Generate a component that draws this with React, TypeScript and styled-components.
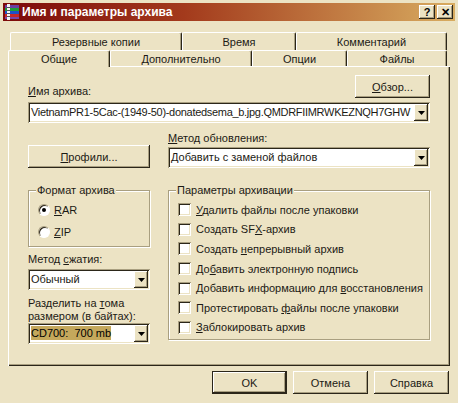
import React from 'react';
import styled, { createGlobalStyle } from 'styled-components';

const FACE = '#ECE3C4';
const LIGHT = '#FFFFFF';
const SHADOW = '#A99F80';
const DARK = '#2B2619';
const TEXT = '#1c1a14';
const FONT = '"Liberation Sans", Arial, sans-serif';

const Global = createGlobalStyle`
  html, body { margin: 0; padding: 0; background: ${FACE}; }
  body { font-family: ${FONT}; font-size: 11px; color: ${TEXT}; }
  * { box-sizing: border-box; }
`;

const Window = styled.div`
  width: 458px;
  height: 403px;
  background: ${FACE};
  padding: 3px 3px 0;
  display: flex;
  flex-direction: column;
  overflow: hidden;
`;

const TitleBar = styled.div`
  height: 18px;
  display: flex;
  align-items: center;
  padding: 0 2px 0 1px;
  background: linear-gradient(to right, #7c0a0a 0%, #a33a1c 40%, #d8ac60 100%);
`;

const TitleText = styled.span`
  color: #fff;
  font-weight: bold;
  font-size: 12px;
  margin-left: 2px;
  flex: 1;
  white-space: nowrap;
`;

const CaptionButton = styled.div<{ $gap?: number }>`
  width: 16px;
  height: 14px;
  margin-left: ${(p) => p.$gap ?? 0}px;
  background: ${FACE};
  box-shadow: inset -1px -1px ${DARK}, inset 1px 1px ${LIGHT}, inset -2px -2px ${SHADOW};
  display: flex;
  align-items: center;
  justify-content: center;
  font-weight: bold;
  font-size: 11px;
  line-height: 14px;
  color: #000;
`;

const TabArea = styled.div`
  margin-top: 11px;
  padding-left: 5px;
  display: flex;
  flex-direction: column;
`;

const TabRow = styled.div<{ $h: number; $indent?: number }>`
  display: flex;
  height: ${(p) => p.$h}px;
  margin-left: ${(p) => p.$indent ?? 0}px;
`;

const Tab = styled.div<{ $w: number; $active?: boolean }>`
  width: ${(p) => p.$w}px;
  height: ${(p) => (p.$active ? 'calc(100% + 1px)' : '100%')};
  display: flex;
  align-items: center;
  justify-content: center;
  background: ${FACE};
  border-top: 1px solid ${LIGHT};
  border-left: 1px solid ${LIGHT};
  border-right: 1px solid ${DARK};
  border-radius: 2px 2px 0 0;
  box-shadow: inset -1px 0 ${SHADOW};
  position: relative;
  z-index: ${(p) => (p.$active ? 2 : 0)};
  white-space: nowrap;
`;

const Panel = styled.div`
  width: 442px;
  height: 300px;
  padding: 9px 20px 0 20px;
  box-shadow: inset 1px 1px ${LIGHT}, inset -1px -1px ${DARK}, inset -2px -2px ${SHADOW};
  display: flex;
  flex-direction: column;
`;

const TopRow = styled.div`
  display: flex;
  justify-content: space-between;
  align-items: flex-end;
`;

const Label = styled.div<{ $mt?: number }>`
  line-height: 13px;
  margin-top: ${(p) => p.$mt ?? 0}px;
  white-space: nowrap;
`;

const U = styled.span`
  text-decoration: underline;
  text-underline-offset: 1px;
`;

const Button = styled.button<{ $w?: number; $default?: boolean }>`
  width: ${(p) => p.$w ?? 75}px;
  height: 23px;
  padding: 0;
  border: none;
  background: ${FACE};
  color: ${TEXT};
  font: 11px ${FONT};
  box-shadow: ${(p) =>
    p.$default
      ? `inset 0 0 0 1px ${DARK}, inset -2px -2px ${DARK}, inset 2px 2px ${LIGHT}, inset -3px -3px ${SHADOW}`
      : `inset -1px -1px ${DARK}, inset 1px 1px ${LIGHT}, inset -2px -2px ${SHADOW}`};
`;

const Combo = styled.div<{ $mt?: number }>`
  height: 21px;
  width: 100%;
  margin-top: ${(p) => p.$mt ?? 0}px;
  background: #fff;
  display: flex;
  align-items: center;
  padding: 2px;
  box-shadow: inset 1px 1px ${SHADOW}, inset -1px -1px ${LIGHT}, inset 2px 2px ${DARK},
    inset -2px -2px ${FACE};
`;

const ComboText = styled.span<{ $tight?: boolean }>`
  flex: 1;
  min-width: 0;
  padding-left: 1px;
  white-space: nowrap;
  overflow: hidden;
  line-height: 15px;
  letter-spacing: ${(p) => (p.$tight ? '-0.3px' : 'normal')};
`;

const Selected = styled.span`
  background: #c4a85c;
  color: #000;
  padding: 1px 0;
`;

const DropButton = styled.span`
  width: 14px;
  height: 17px;
  flex: none;
  background: ${FACE};
  box-shadow: inset -1px -1px ${DARK}, inset 1px 1px ${LIGHT}, inset -2px -2px ${SHADOW};
  display: flex;
  align-items: center;
  justify-content: center;
`;

const TwoCols = styled.div<{ $mt: number; $align: string }>`
  display: grid;
  grid-template-columns: 122px 262px;
  column-gap: 18px;
  align-items: ${(p) => p.$align};
  margin-top: ${(p) => p.$mt}px;
`;

const Column = styled.div`
  display: flex;
  flex-direction: column;
`;

const Group = styled.fieldset<{ $pt: number; $pb: number }>`
  margin: 0;
  min-width: 0;
  padding: ${(p) => `${p.$pt}px 9px ${p.$pb}px 9px`};
  border: 1px solid ${SHADOW};
  box-shadow: inset 1px 1px ${LIGHT}, 1px 1px ${LIGHT};
`;

const Legend = styled.legend`
  padding: 0 1px;
  margin-left: -2px;
  line-height: 13px;
  background: ${FACE};
`;

const OptionRow = styled.div<{ $h: number; $gap?: number }>`
  display: flex;
  align-items: center;
  height: ${(p) => p.$h}px;
  margin-bottom: ${(p) => p.$gap ?? 0}px;
  white-space: nowrap;
`;

const OptionText = styled.span`
  white-space: pre;
`;

const RadioCircle = styled.span`
  width: 12px;
  height: 12px;
  flex: none;
  border-radius: 50%;
  background: #fff;
  border: 1px solid;
  border-color: ${SHADOW} ${LIGHT} ${LIGHT} ${SHADOW};
  box-shadow: inset 1px 1px ${DARK};
  display: flex;
  align-items: center;
  justify-content: center;
  margin-right: 4px;
`;

const RadioDot = styled.span`
  width: 4px;
  height: 4px;
  border-radius: 50%;
  background: #000;
`;

const CheckBox = styled.span`
  width: 13px;
  height: 13px;
  flex: none;
  background: #fff;
  box-shadow: inset 1px 1px ${SHADOW}, inset -1px -1px ${LIGHT}, inset 2px 2px ${DARK},
    inset -2px -2px ${FACE};
  margin-right: 5px;
`;

const Footer = styled.div`
  display: flex;
  justify-content: flex-end;
  gap: 6px;
  margin-top: 5px;
  padding-right: 6px;
`;

const Arrow = () => (
  <svg width="7" height="4" viewBox="0 0 7 4">
    <path d="M0 0h7L3.5 4z" fill="#000" />
  </svg>
);

const RarIcon = () => (
  <svg width="16" height="16" viewBox="0 0 16 16">
    <rect x="1" y="1" width="14" height="3" fill="#6a3fa0" />
    <rect x="1" y="4" width="14" height="3" fill="#1e9a3a" />
    <rect x="1" y="7" width="14" height="3" fill="#2050c8" />
    <rect x="1" y="10" width="14" height="3" fill="#c82828" />
    <rect x="1" y="13" width="14" height="2" fill="#7a44a8" />
    <rect x="3" y="0" width="3" height="16" fill="#f2f2f2" />
    <path d="M3 3.5h3M3 6.5h3M3 9.5h3M3 12.5h3" stroke="#555" strokeWidth="1" />
  </svg>
);

const ComboBox: React.FC<{ children: React.ReactNode; mt?: number; tight?: boolean }> = ({
  children,
  mt,
  tight,
}) => (
  <Combo $mt={mt}>
    <ComboText $tight={tight}>{children}</ComboText>
    <DropButton>
      <Arrow />
    </DropButton>
  </Combo>
);

const options: React.ReactNode[] = [
  <><U>У</U>далить файлы после упаковки</>,
  <>Создать SF<U>X</U>-архив</>,
  <>Создать <U>н</U>епрерывный архив</>,
  <>До<U>б</U>авить электронную подпись</>,
  <>Добавить информацию для <U>в</U>осстановления</>,
  <>Протестировать <U>ф</U>айлы после упаковки</>,
  <><U>З</U>аблокировать архив</>,
];

export default function App() {
  return (
    <>
      <Global />
      <Window>
        <TitleBar>
          <RarIcon />
          <TitleText>Имя и параметры архива</TitleText>
          <CaptionButton>?</CaptionButton>
          <CaptionButton $gap={2}>✕</CaptionButton>
        </TitleBar>

        <TabArea>
          <TabRow $h={18} $indent={2}>
            <Tab $w={172}>Резервные копии</Tab>
            <Tab $w={114}>Время</Tab>
            <Tab $w={151}>Комментарий</Tab>
          </TabRow>
          <TabRow $h={16}>
            <Tab $w={102} $active>Общие</Tab>
            <Tab $w={142}>Дополнительно</Tab>
            <Tab $w={95}>Опции</Tab>
            <Tab $w={100}>Файлы</Tab>
          </TabRow>
          <Panel>
            <TopRow>
              <Label>
                <U>И</U>мя архива:
              </Label>
              <Button $w={75}>
                <U>О</U>бзор...
              </Button>
            </TopRow>
            <ComboBox mt={4} tight>
              VietnamPR1-5Cac-(1949-50)-donatedsema_b.jpg.QMDRFIIMRWKEZNQH7GHW
            </ComboBox>

            <TwoCols $mt={9} $align="end">
              <Button $w={122}>
                <U>П</U>рофили...
              </Button>
              <Column>
                <Label>
                  <U>М</U>етод обновления:
                </Label>
                <ComboBox mt={2}>Добавить с заменой файлов</ComboBox>
              </Column>
            </TwoCols>

            <TwoCols $mt={16} $align="start">
              <Column>
                <Group $pt={4} $pb={5}>
                  <Legend>Формат архива</Legend>
                  <OptionRow $h={18} $gap={4}>
                    <RadioCircle>
                      <RadioDot />
                    </RadioCircle>
                    <OptionText>
                      <U>R</U>AR
                    </OptionText>
                  </OptionRow>
                  <OptionRow $h={18}>
                    <RadioCircle />
                    <OptionText>
                      <U>Z</U>IP
                    </OptionText>
                  </OptionRow>
                </Group>
                <Label $mt={6}>
                  Метод <U>с</U>жатия:
                </Label>
                <ComboBox mt={3}>Обычный</ComboBox>
                <Label $mt={7}>
                  Разделить на <U>т</U>ома
                  <br />
                  размером (в байтах):
                </Label>
                <ComboBox>
                  <Selected>CD700:&nbsp; 700 mb</Selected>
                </ComboBox>
              </Column>
              <Group $pt={3} $pb={2}>
                <Legend>Параметры архивации</Legend>
                {options.map((o, i) => (
                  <OptionRow key={i} $h={19.6}>
                    <CheckBox />
                    <OptionText>{o}</OptionText>
                  </OptionRow>
                ))}
              </Group>
            </TwoCols>
          </Panel>
        </TabArea>

        <Footer>
          <Button $default>OK</Button>
          <Button>Отмена</Button>
          <Button>Справка</Button>
        </Footer>
      </Window>
    </>
  );
}
